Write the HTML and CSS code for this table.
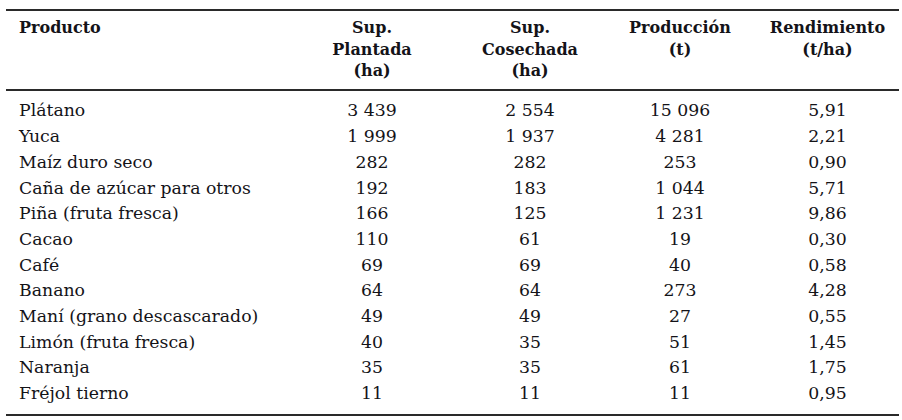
FILE: index.html
```html
<!DOCTYPE html>
<html lang="es">
<head>
<meta charset="utf-8">
<title>Producción agrícola</title>
<link rel="stylesheet" href="styles.css">
</head>
<body>
<table class="tabla">
  <colgroup>
    <col class="c1"><col class="c2"><col class="c3"><col class="c4"><col class="c5">
  </colgroup>
  <thead>
    <tr>
      <th class="left">Producto</th>
      <th>Sup.<br>Plantada<br>(ha)</th>
      <th>Sup.<br>Cosechada<br>(ha)</th>
      <th>Producción<br>(t)</th>
      <th>Rendimiento<br>(t/ha)</th>
    </tr>
  </thead>
  <tbody>
    <tr><td class="left">Plátano</td><td>3 439</td><td>2 554</td><td>15 096</td><td>5,91</td></tr>
    <tr><td class="left">Yuca</td><td>1 999</td><td>1 937</td><td>4 281</td><td>2,21</td></tr>
    <tr><td class="left">Maíz duro seco</td><td>282</td><td>282</td><td>253</td><td>0,90</td></tr>
    <tr><td class="left">Caña de azúcar para otros</td><td>192</td><td>183</td><td>1 044</td><td>5,71</td></tr>
    <tr><td class="left">Piña (fruta fresca)</td><td>166</td><td>125</td><td>1 231</td><td>9,86</td></tr>
    <tr><td class="left">Cacao</td><td>110</td><td>61</td><td>19</td><td>0,30</td></tr>
    <tr><td class="left">Café</td><td>69</td><td>69</td><td>40</td><td>0,58</td></tr>
    <tr><td class="left">Banano</td><td>64</td><td>64</td><td>273</td><td>4,28</td></tr>
    <tr><td class="left">Maní (grano descascarado)</td><td>49</td><td>49</td><td>27</td><td>0,55</td></tr>
    <tr><td class="left">Limón (fruta fresca)</td><td>40</td><td>35</td><td>51</td><td>1,45</td></tr>
    <tr><td class="left">Naranja</td><td>35</td><td>35</td><td>61</td><td>1,75</td></tr>
    <tr><td class="left">Fréjol tierno</td><td>11</td><td>11</td><td>11</td><td>0,95</td></tr>
  </tbody>
</table>
</body>
</html>
```
FILE: styles.css
```css
html, body {
  margin: 0;
  padding: 0;
  background: #ffffff;
}

body {
  font-family: "DejaVu Serif", "Liberation Serif", serif;
  color: #141318;
}

.tabla {
  margin: 9px 0 0 6px;
  width: 893px;
  table-layout: fixed;
  border-collapse: separate;
  border-spacing: 0;
  border-top: 2px solid #2a2a2a;
  border-bottom: 2px solid #2a2a2a;
}

.c1 { width: 282px; }
.c2 { width: 168px; }
.c3 { width: 148px; }
.c4 { width: 152px; }
.c5 { width: 143px; }

.tabla th {
  font-size: 16px;
  font-weight: bold;
  line-height: 21.5px;
  text-align: center;
  vertical-align: top;
  padding: 6px 0 7.5px 0;
  border-bottom: 2px solid #2a2a2a;
}

.tabla td {
  font-size: 17.3px;
  line-height: 25.7px;
  text-align: center;
  padding: 0;
  white-space: nowrap;
}

.tabla tbody tr:first-child td {
  padding-top: 7.4px;
}

.tabla tbody tr:last-child td {
  padding-bottom: 7px;
}

.tabla .left {
  text-align: left;
  padding-left: 13px;
}
```
